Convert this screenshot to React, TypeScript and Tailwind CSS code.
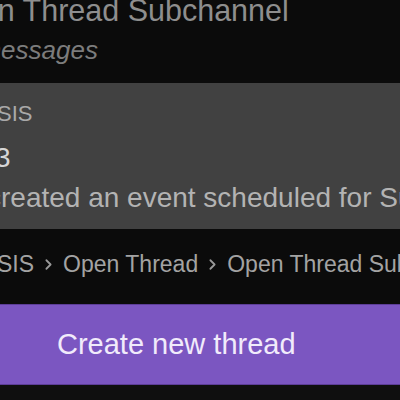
import { ChevronRight } from "lucide-react";

const crumbs = ["SIS", "Open Thread", "Open Thread Subchannel"];

export default function App() {
  return (
    <div
      className="w-[400px] h-[400px] overflow-hidden bg-[#0b0b0b] flex flex-col"
      style={{ fontFamily: '"Liberation Sans", Arial, sans-serif' }}
    >
      <div className="ml-[-60px] mt-[-7px] whitespace-nowrap text-[30.5px] leading-[34px] text-[#8e8e8e]">
        Open Thread Subchannel
      </div>
      <div className="ml-[-61px] mt-[8px] whitespace-nowrap italic text-[26px] leading-[30px] text-[#7c7c7c]">
        No messages
      </div>

      <div className="mt-[18px] bg-[#414141] pt-[18px] pb-[15px] flex flex-col">
        <div className="ml-[-3px] text-[22px] leading-[26px] text-[#a9a9a9]">SIS</div>
        <div className="ml-[-5px] mt-[15px] text-[28px] leading-[32px] text-[#d6d6d6]">3</div>
        <div className="ml-[-13px] mt-[8px] whitespace-nowrap text-[28px] leading-[32px] text-[#b3b3b3]">
          created an event scheduled for Sunday
        </div>
      </div>

      <div className="ml-[-3px] mt-[21px] flex items-center gap-[6px] whitespace-nowrap text-[23px] leading-[28px] text-[#a3a3a3]">
        {crumbs.map((c, i) => (
          <div key={c} className="flex items-center gap-[6px]">
            {i > 0 && <ChevronRight size={17} strokeWidth={2.5} className="text-[#999999]" />}
            <span>{c}</span>
          </div>
        ))}
      </div>

      <button className="mt-[26px] h-[81px] w-full shrink-0 bg-[#7b56c1] border-y border-[#5d3e98] pl-[57px] text-left text-[29px] text-[#f1ebfb]">
        Create new thread
      </button>

      <div className="flex-1 bg-[#0f0f0f]" />
    </div>
  );
}
